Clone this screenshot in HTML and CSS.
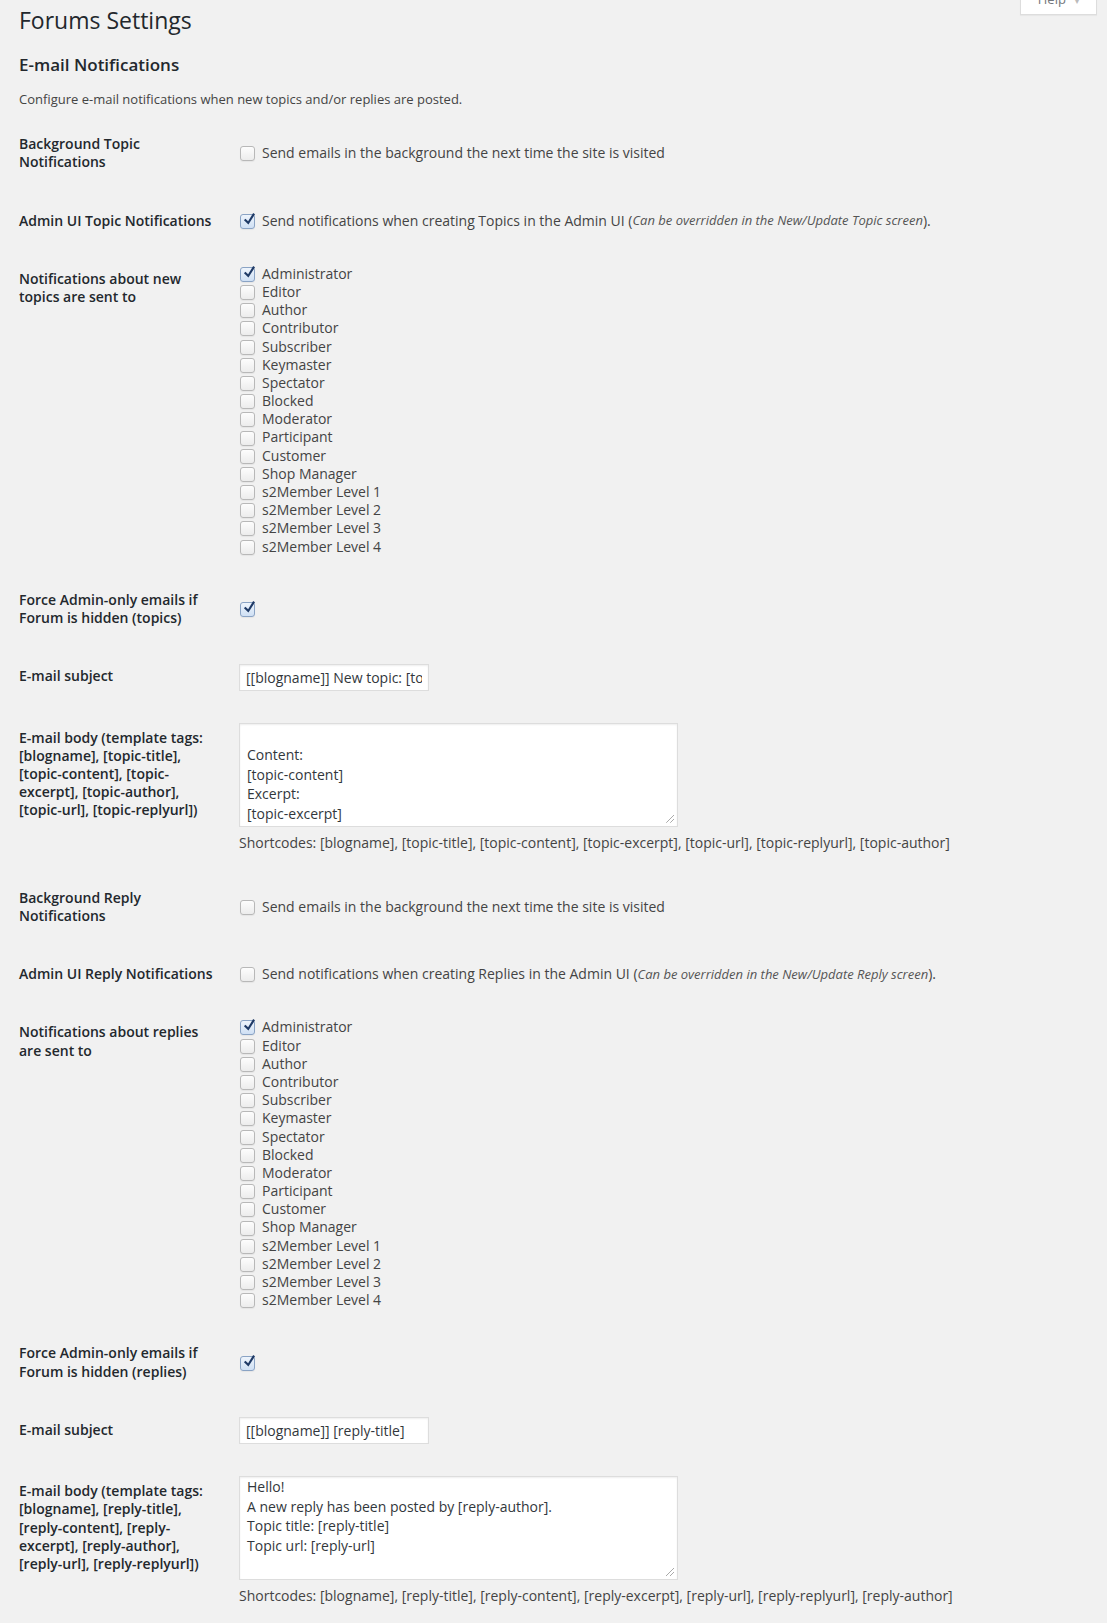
FILE: index.html
```html
<!DOCTYPE html>
<html lang="en">
  <head>
    <meta charset="UTF-8" />
    <meta name="viewport" content="width=device-width, initial-scale=1.0" />
    <title>Forums Settings</title>
    <link rel="stylesheet" href="styles.css">
  </head>
  <body>
    <div class="help-tab">Help <span class="arrow">&#9662;</span></div>

    <div class="wrap">
      <h1>Forums Settings</h1>

      <h2>E-mail Notifications</h2>
      <p class="intro">Configure e-mail notifications when new topics and/or replies are posted.</p>

      <table class="form-table">
        <tr>
          <th>Background Topic Notifications</th>
          <td>
            <label class="check"><span class="box"></span>Send emails in the background the next time the site is visited</label>
          </td>
        </tr>
        <tr>
          <th>Admin UI Topic Notifications</th>
          <td>
            <label class="check"><span class="box checked"><svg viewBox="0 0 20 20"><path d="M15.2 2.6l2.3 1.6-8.2 12.6-5.6-5.2 1.8-2 3.4 3.1z"/></svg></span>Send notifications when creating Topics in the Admin UI (<em>Can be overridden in the New/Update Topic screen</em>).</label>
          </td>
        </tr>
        <tr>
          <th>Notifications about new topics are sent to</th>
          <td class="roles">
            <label class="check"><span class="box checked"><svg viewBox="0 0 20 20"><path d="M15.2 2.6l2.3 1.6-8.2 12.6-5.6-5.2 1.8-2 3.4 3.1z"/></svg></span>Administrator</label>
            <label class="check"><span class="box"></span>Editor</label>
            <label class="check"><span class="box"></span>Author</label>
            <label class="check"><span class="box"></span>Contributor</label>
            <label class="check"><span class="box"></span>Subscriber</label>
            <label class="check"><span class="box"></span>Keymaster</label>
            <label class="check"><span class="box"></span>Spectator</label>
            <label class="check"><span class="box"></span>Blocked</label>
            <label class="check"><span class="box"></span>Moderator</label>
            <label class="check"><span class="box"></span>Participant</label>
            <label class="check"><span class="box"></span>Customer</label>
            <label class="check"><span class="box"></span>Shop Manager</label>
            <label class="check"><span class="box"></span>s2Member Level 1</label>
            <label class="check"><span class="box"></span>s2Member Level 2</label>
            <label class="check"><span class="box"></span>s2Member Level 3</label>
            <label class="check"><span class="box"></span>s2Member Level 4</label>
          </td>
        </tr>
        <tr>
          <th>Force Admin-only emails if Forum is hidden (topics)</th>
          <td>
            <label class="check"><span class="box checked"><svg viewBox="0 0 20 20"><path d="M15.2 2.6l2.3 1.6-8.2 12.6-5.6-5.2 1.8-2 3.4 3.1z"/></svg></span></label>
          </td>
        </tr>
        <tr>
          <th>E-mail subject</th>
          <td>
            <input type="text" class="subject" value="[[blogname]] New topic: [topic-title]" />
          </td>
        </tr>
        <tr>
          <th>E-mail body (template tags: [blogname], [topic-title], [topic-content], [topic-excerpt], [topic-author], [topic-url], [topic-replyurl])</th>
          <td>
            <div class="textarea">
              <div class="viewport">
                <div class="scroll topic-body">Hello!
A new topic has been posted by [topic-author].
Topic title: [topic-title]
Topic url: [topic-url]

Content:
[topic-content]
Excerpt:
[topic-excerpt]</div>
              </div>
              <span class="grip"></span>
            </div>
            <p class="description">Shortcodes: [blogname], [topic-title], [topic-content], [topic-excerpt], [topic-url], [topic-replyurl], [topic-author]</p>
          </td>
        </tr>
        <tr>
          <th>Background Reply Notifications</th>
          <td>
            <label class="check"><span class="box"></span>Send emails in the background the next time the site is visited</label>
          </td>
        </tr>
        <tr>
          <th>Admin UI Reply Notifications</th>
          <td>
            <label class="check"><span class="box"></span>Send notifications when creating Replies in the Admin UI (<em>Can be overridden in the New/Update Reply screen</em>).</label>
          </td>
        </tr>
        <tr>
          <th>Notifications about replies are sent to</th>
          <td class="roles">
            <label class="check"><span class="box checked"><svg viewBox="0 0 20 20"><path d="M15.2 2.6l2.3 1.6-8.2 12.6-5.6-5.2 1.8-2 3.4 3.1z"/></svg></span>Administrator</label>
            <label class="check"><span class="box"></span>Editor</label>
            <label class="check"><span class="box"></span>Author</label>
            <label class="check"><span class="box"></span>Contributor</label>
            <label class="check"><span class="box"></span>Subscriber</label>
            <label class="check"><span class="box"></span>Keymaster</label>
            <label class="check"><span class="box"></span>Spectator</label>
            <label class="check"><span class="box"></span>Blocked</label>
            <label class="check"><span class="box"></span>Moderator</label>
            <label class="check"><span class="box"></span>Participant</label>
            <label class="check"><span class="box"></span>Customer</label>
            <label class="check"><span class="box"></span>Shop Manager</label>
            <label class="check"><span class="box"></span>s2Member Level 1</label>
            <label class="check"><span class="box"></span>s2Member Level 2</label>
            <label class="check"><span class="box"></span>s2Member Level 3</label>
            <label class="check"><span class="box"></span>s2Member Level 4</label>
          </td>
        </tr>
        <tr>
          <th>Force Admin-only emails if Forum is hidden (replies)</th>
          <td>
            <label class="check"><span class="box checked"><svg viewBox="0 0 20 20"><path d="M15.2 2.6l2.3 1.6-8.2 12.6-5.6-5.2 1.8-2 3.4 3.1z"/></svg></span></label>
          </td>
        </tr>
        <tr>
          <th>E-mail subject</th>
          <td>
            <input type="text" class="subject" value="[[blogname]] [reply-title]" />
          </td>
        </tr>
        <tr>
          <th>E-mail body (template tags: [blogname], [reply-title], [reply-content], [reply-excerpt], [reply-author], [reply-url], [reply-replyurl])</th>
          <td>
            <div class="textarea">
              <div class="viewport">
                <div class="scroll reply-body">Hello!
A new reply has been posted by [reply-author].
Topic title: [reply-title]
Topic url: [reply-url]</div>
              </div>
              <span class="grip"></span>
            </div>
            <p class="description">Shortcodes: [blogname], [reply-title], [reply-content], [reply-excerpt], [reply-url], [reply-replyurl], [reply-author]</p>
          </td>
        </tr>
      </table>
    </div>
  </body>
</html>
```

FILE: styles.css
```css
html,
body {
  margin: 0;
  padding: 0;
}
body {
  background-color: #f1f1f1;
  color: #444;
  font-family: "Open Sans", sans-serif;
  font-size: 13px;
  line-height: 1.4em;
  position: relative;
}
.help-tab {
  position: absolute;
  top: -9px;
  right: 10px;
  width: 75px;
  height: 23px;
  background-color: #fff;
  border: 1px solid #ddd;
  border-top: none;
  box-shadow: 0 1px 1px rgba(0, 0, 0, 0.04);
  color: #72777c;
  font-size: 13px;
  line-height: 17px;
  text-align: center;
}
.help-tab .arrow {
  font-size: 8px;
  color: #bbb;
  margin-left: 6px;
}
.wrap {
  padding: 0 20px 0 19px;
}
h1 {
  margin: 0;
  padding: 6px 0 0;
  font-size: 23px;
  font-weight: 400;
  line-height: 29px;
  color: #23282d;
}
h2 {
  margin: 17px 0 0;
  font-size: 17px;
  font-weight: 600;
  line-height: 25px;
  color: #23282d;
}
.intro {
  margin: 13px 0 0;
  font-size: 13px;
}
.form-table {
  border-collapse: collapse;
  margin-top: 7px;
  width: 100%;
}
.form-table th {
  width: 200px;
  padding: 20px 10px 20px 0;
  text-align: left;
  vertical-align: top;
  font-size: 14px;
  font-weight: 600;
  line-height: 1.3;
  color: #23282d;
}
.form-table td {
  padding: 15px 10px;
  vertical-align: middle;
  font-size: 14px;
  line-height: 1.3;
}
.form-table td.roles {
  vertical-align: top;
}
.check {
  display: flex;
  align-items: center;
  height: 18.2px;
}
.box {
  flex: none;
  box-sizing: border-box;
  width: 15px;
  height: 15px;
  margin: 1px 7px 0 1px;
  border: 1px solid #b8b8b8;
  border-radius: 3px;
  background: linear-gradient(#fdfdfd, #ececec);
  box-shadow: 0 1px 1px rgba(0, 0, 0, 0.05);
  position: relative;
}
.box.checked {
  border-color: #8aa3c4;
  background: linear-gradient(#eef4fc, #cfe0f4);
}
.box svg {
  position: absolute;
  left: 0;
  top: -4px;
  width: 16px;
  height: 16px;
  fill: #1f3a66;
}
em {
  font-size: 13px;
  color: #555;
}
.subject {
  display: block;
  box-sizing: border-box;
  width: 190px;
  height: 27px;
  margin: 1.5px 0 3px;
  padding: 3px 6px;
  border: 1px solid #ddd;
  box-shadow: inset 0 1px 2px rgba(0, 0, 0, 0.07);
  background-color: #fff;
  color: #32373c;
  font-family: "Open Sans", sans-serif;
  font-size: 14px;
  outline: none;
}
.textarea {
  position: relative;
  box-sizing: border-box;
  width: 439px;
  height: 104px;
  margin-top: -1px;
  padding-top: 2px;
  border: 1px solid #ddd;
  box-shadow: inset 0 1px 2px rgba(0, 0, 0, 0.07);
  background-color: #fff;
  color: #32373c;
}
.textarea .viewport {
  height: 100%;
  overflow: hidden;
}
.textarea .scroll {
  padding: 0 7px;
  white-space: pre;
  line-height: 19.5px;
}
.textarea .reply-body {
  margin-top: -2px;
}
.textarea .topic-body {
  margin-top: -78px;
}
.grip {
  position: absolute;
  right: 3px;
  bottom: 3px;
  width: 10px;
  height: 10px;
  background: repeating-linear-gradient(135deg, transparent 0 2px, #aaa 2px 3px);
  clip-path: polygon(100% 0, 100% 100%, 0 100%);
}
.description {
  margin: 7px 0 0;
  padding-bottom: 2px;
  font-size: 14px;
  color: #444;
}
```
